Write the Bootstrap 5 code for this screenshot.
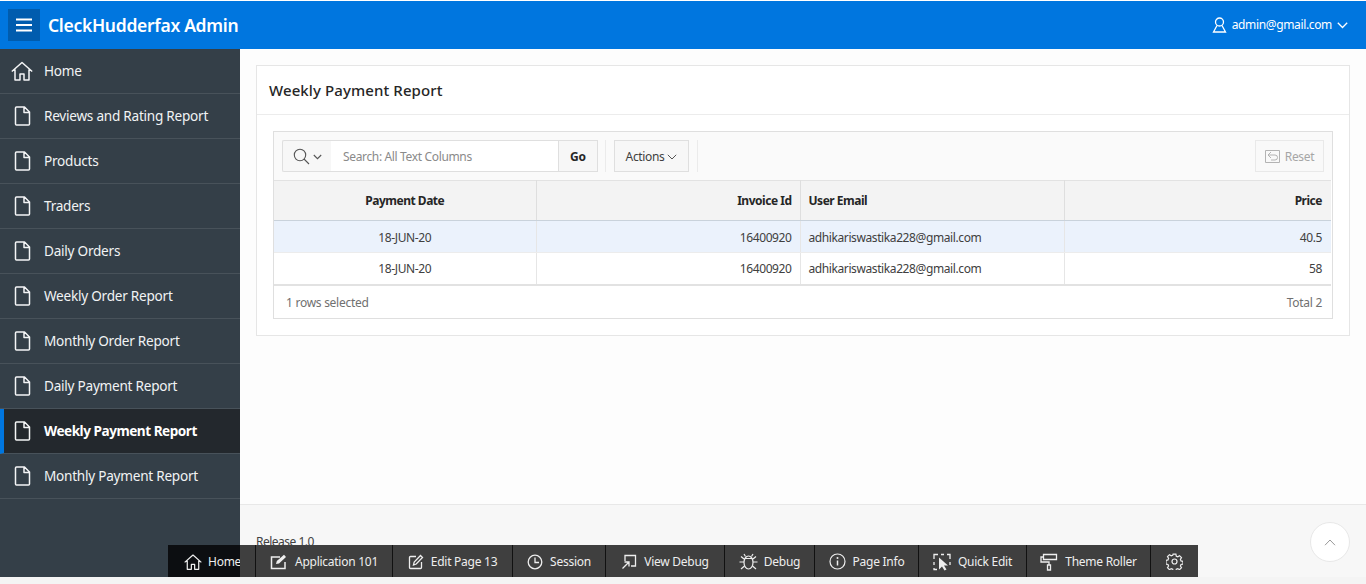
<!DOCTYPE html>
<html lang="en"><head><meta charset="utf-8"><title>Weekly Payment Report</title>
<link rel="stylesheet" href="https://cdn.jsdelivr.net/npm/bootstrap@5.3.0/dist/css/bootstrap.min.css">
<style>
html,body{height:100%;background:#f4f4f4;overflow:hidden}
body{font-family:"Noto Sans","Open Sans",sans-serif;font-size:12.5px;color:#404040}
.shell{height:577px;padding-top:1px;background:#fff;overflow:hidden}
.topbar{height:48px;background:#0076df;color:#fff;padding:0 18px 0 8px}
.burger{width:32px;height:32px;background:#005cae;border:0;padding:0}
.brand-name{font-size:17.5px;font-weight:600;margin-left:8px;letter-spacing:-.3px}
.user-link{font-size:12px;gap:5px;letter-spacing:-.35px}
.body-wrap{height:528px}
.side{width:240px;background:#343f48;flex:none}
.side-item{height:45px;color:#f1f3f4;font-size:13.6px;letter-spacing:-.25px;border-bottom:1px solid #48525a;padding-left:11px;gap:11px}
.side-item svg{flex:none;width:22px;height:22px}
.side-item.on{background:#23282d;font-weight:700;border-left:4px solid #0076df;padding-left:7px;letter-spacing:-.48px;color:#fff}
.main-col{min-width:0;background:#fff}
.content-zone{flex:1;padding:16px 16px 0;background:#fdfdfd}
.panel{border:1px solid #e6e6e6;background:#fff;height:271px}
.panel-head{height:49px;border-bottom:1px solid #ececec;padding-left:12px;font-size:15px;font-weight:500;color:#262626;letter-spacing:.1px}
.panel-body{padding:16px}
.report{border:1px solid #dfdfdf;height:188px;background:#fff}
.tools{height:48px;background:#fafafa;padding:8px}
.tool{height:32px;border:1px solid #dfdfdf;background:#f7f7f7;font-size:12px;color:#404040;padding-top:1px}
.magnify{width:49px;gap:3px;justify-content:center;border-right:0;border-radius:2px 0 0 2px}
.field{width:227px;background:#fff;border-left:0;border-right:0;color:#8a8a8a;padding-left:12px;letter-spacing:-.35px}
.go{width:40px;font-weight:700;justify-content:center;color:#262626;letter-spacing:-.2px}
.act{width:75px;justify-content:center;gap:3px;margin-left:16px;letter-spacing:-.35px}
.sep{width:1px;height:32px;background:#ebebeb;margin-left:8px}
.sep.first{margin-left:7px;margin-right:-8px}
.reset{width:69px;margin-left:auto;color:#a6a6a6;background:#f9f9f9;border-color:#e9e9e9;justify-content:center;gap:5px;letter-spacing:-.35px}
.grid-table{table-layout:fixed;width:1057px;margin:0;font-size:12px;border-collapse:collapse;letter-spacing:-.4px}
.grid-table th,.grid-table td{padding:0 8px 0 8px;border:0;border-right:1px solid #e6e6e6;vertical-align:middle;color:#404040;box-shadow:none;background:transparent}
.grid-table th:last-child,.grid-table td:last-child{border-right:0;padding-right:9px}
.grid-table thead th{height:40px;background:#f3f3f3;font-weight:700;color:#262626;border-top:1px solid #e2e2e2;border-bottom:1px solid #c9d2db;border-right-color:#dedede;letter-spacing:-.48px}
.grid-table tbody td{height:32px;border-bottom:1px solid #ececec;padding-top:2px}
.grid-table tbody tr.picked td{background:#ebf2fc}
.grid-table tbody tr:last-child td{border-bottom:2px solid #e2e2e2}
.report-foot{height:34px;padding:0 10px 0 12px;color:#707070;font-size:12px;letter-spacing:-.27px}
.foot-zone{height:73px;background:#f7f7f7;border-top:1px solid #e8e8e8;padding:28px 16px 0;font-size:12px;color:#404040;position:relative;letter-spacing:-.5px}
.to-top{position:absolute;right:16px;top:17px;width:40px;height:40px;border-radius:50%;background:#fff;border:1px solid #e8e8e8}
.devbar{position:fixed;left:168px;top:545px;width:1030px;height:32px;background:#3f3f3f;color:#eee;font-size:12px;letter-spacing:-.26px}
.dev-item{height:32px;border-right:1px solid #111;justify-content:center;gap:7px;flex:none;padding-top:1px}
.dev-item svg{flex:none}
.dev-home{width:72px;background:#0c0e11;overflow:hidden;border-right:0;justify-content:flex-start;padding-left:16px;white-space:nowrap;gap:6px}
.dev-spacer{width:16px;height:32px;border-right:1px solid #111;flex:none}
</style></head><body>
<svg width="0" height="0" class="d-none"><defs>
<symbol id="doc" viewBox="0 0 22 22"><path d="M4.500 3a1 1 0 0 1 1-1h8l5 5v12a1 1 0 0 1-1 1h-12a1 1 0 0 1-1-1zM13 2.500V7.500h5.500" fill="none" stroke="#f4f5f6" stroke-width="1.500" stroke-linejoin="round"/></symbol>
<symbol id="house" viewBox="0 0 22 22"><path d="M.8 11.500 11 2.500l10.200 9M4 9.500v10.500h5v-6h4v6h5V9.500" fill="none" stroke="currentColor" stroke-width="1.500" stroke-linejoin="round"/></symbol>
</defs></svg>
<div class="shell">
<header class="topbar d-flex align-items-center">
<button class="burger d-flex align-items-center justify-content-center" aria-label="Menu"><svg width="16" height="14" viewBox="0 0 16 14"><path d="M0 1.500h16M0 7h16M0 12.500h16" stroke="#fff" stroke-width="2"/></svg></button>
<span class="brand-name">CleckHudderfax Admin</span>
<div class="user-link d-flex align-items-center ms-auto"><svg width="15" height="16" viewBox="0 0 15 16"><circle cx="7.500" cy="5" r="4" fill="none" stroke="#fff" stroke-width="1.300"/><path d="M5 8.500 1.500 15h12L10 8.500" fill="none" stroke="#fff" stroke-width="1.300"/></svg><span>admin@gmail.com</span><svg width="11" height="7" viewBox="0 0 11 7"><path d="m.8.800 4.700 4.700L10.200.800" fill="none" stroke="#fff" stroke-width="1.300"/></svg></div>
</header>
<div class="body-wrap d-flex">
<nav class="side">
<div class="side-item d-flex align-items-center"><svg style="color:#f4f5f6"><use href="#house"/></svg>Home</div>
<div class="side-item d-flex align-items-center"><svg><use href="#doc"/></svg>Reviews and Rating Report</div>
<div class="side-item d-flex align-items-center"><svg><use href="#doc"/></svg>Products</div>
<div class="side-item d-flex align-items-center"><svg><use href="#doc"/></svg>Traders</div>
<div class="side-item d-flex align-items-center"><svg><use href="#doc"/></svg>Daily Orders</div>
<div class="side-item d-flex align-items-center"><svg><use href="#doc"/></svg>Weekly Order Report</div>
<div class="side-item d-flex align-items-center"><svg><use href="#doc"/></svg>Monthly Order Report</div>
<div class="side-item d-flex align-items-center"><svg><use href="#doc"/></svg>Daily Payment Report</div>
<div class="side-item on d-flex align-items-center"><svg><use href="#doc"/></svg>Weekly Payment Report</div>
<div class="side-item d-flex align-items-center"><svg><use href="#doc"/></svg>Monthly Payment Report</div>
</nav>
<div class="main-col flex-grow-1 d-flex flex-column">
<div class="content-zone">
<section class="panel">
<div class="panel-head d-flex align-items-center">Weekly Payment Report</div>
<div class="panel-body">
<div class="report">
<div class="tools d-flex align-items-center">
<div class="tool magnify d-flex align-items-center"><svg width="17" height="17" viewBox="0 0 17 17"><circle cx="7" cy="7" r="5.700" fill="none" stroke="#555" stroke-width="1.100"/><path d="m11 11 5 5" stroke="#555" stroke-width="1.100"/></svg><svg width="9" height="6" viewBox="0 0 9 6"><path d="m.8 1 3.700 3.700L8.200 1" fill="none" stroke="#555" stroke-width="1.100"/></svg></div>
<div class="tool field d-flex align-items-center">Search: All Text Columns</div>
<div class="tool go d-flex align-items-center">Go</div>
<div class="sep first"></div>
<div class="tool act d-flex align-items-center">Actions<svg width="10" height="6" viewBox="0 0 10 6"><path d="m.8.800 4.200 4.200L9.200.800" fill="none" stroke="#555" stroke-width="1"/></svg></div>
<div class="sep"></div>
<div class="tool reset d-flex align-items-center"><svg width="15" height="15" viewBox="0 0 15 15"><path d="M.5 1.500h14v12H.5z" fill="none" stroke="#b3b3b3"/><path d="M3 6h7a2.500 2.500 0 0 1 0 5H6M3 6l3-3M3 6l3 3" fill="none" stroke="#b3b3b3"/></svg>Reset</div>
</div>
<table class="table grid-table">
<colgroup><col style="width:262px"><col style="width:264px"><col style="width:264px"><col></colgroup>
<thead><tr><th class="text-center">Payment Date</th><th class="text-end">Invoice Id</th><th>User Email</th><th class="text-end">Price</th></tr></thead>
<tbody>
<tr class="picked"><td class="text-center">18-JUN-20</td><td class="text-end">16400920</td><td>adhikariswastika228@gmail.com</td><td class="text-end">40.5</td></tr>
<tr><td class="text-center">18-JUN-20</td><td class="text-end">16400920</td><td>adhikariswastika228@gmail.com</td><td class="text-end">58</td></tr>
</tbody></table>
<div class="report-foot d-flex align-items-center justify-content-between"><span>1 rows selected</span><span>Total 2</span></div>
</div></div>
</section>
</div>
<footer class="foot-zone">Release 1.0
<div class="to-top d-flex align-items-center justify-content-center"><svg width="12" height="7" viewBox="0 0 12 7"><path d="M1 6.200 6 1l5 5.200" fill="none" stroke="#999" stroke-width="1"/></svg></div>
</footer>
</div></div>
</div>
<div class="devbar d-flex">
<div class="dev-item dev-home d-flex align-items-center"><svg width="18" height="18" style="color:#eee"><use href="#house"/></svg>Home</div>
<div class="dev-spacer"></div>
<div class="dev-item d-flex align-items-center" style="width:137px"><svg width="18" height="16" viewBox="0 0 18 16"><path d="M15 8v6.500H1.500V3H10" fill="none" stroke="#eee" stroke-width="1.500"/><path d="m6 10 .8-3L14 .8 16 3l-7 6.500z" fill="#eee"/></svg>Application 101</div>
<div class="dev-item d-flex align-items-center" style="width:120px"><svg width="16" height="16" viewBox="0 0 16 16"><path d="M13.500 8v5.500a1 1 0 0 1-1 1h-10a1 1 0 0 1-1-1v-10a1 1 0 0 1 1-1H8M5.500 11l.7-3L12.500 1.500l2 2L8.200 10z" fill="none" stroke="#eee" stroke-width="1.300"/></svg>Edit Page 13</div>
<div class="dev-item d-flex align-items-center" style="width:93px"><svg width="16" height="16" viewBox="0 0 16 16"><circle cx="8" cy="8" r="6.800" fill="none" stroke="#eee" stroke-width="1.300"/><path d="M8 3.500V8.500H12" fill="none" stroke="#eee" stroke-width="1.300"/></svg>Session</div>
<div class="dev-item d-flex align-items-center" style="width:119px"><svg width="16" height="16" viewBox="0 0 16 16"><path d="M4 7V1.500h10.500V12H10M1.500 14.500 8 8M3.500 8H8v4.500" fill="none" stroke="#eee" stroke-width="1.300"/></svg>View Debug</div>
<div class="dev-item d-flex align-items-center" style="width:90px;gap:6px"><svg width="19" height="18" viewBox="0 0 19 18"><ellipse cx="9.500" cy="9.500" rx="4.500" ry="6.500" fill="none" stroke="#eee" stroke-width="1.200"/><path d="M5.500 5.500h8M6.500 3.500 5 1M12.500 3.500 14 1M5 9H.5M14 9h4.500M5.500 13l-3.500 3M13.500 13l3.500 3M5 6 2 3.500M14 6l3-2.500" fill="none" stroke="#eee" stroke-width="1.200"/></svg>Debug</div>
<div class="dev-item d-flex align-items-center" style="width:104px"><svg width="17" height="17" viewBox="0 0 17 17"><circle cx="8.500" cy="8.500" r="7.500" fill="none" stroke="#eee" stroke-width="1.200"/><path d="M8.500 7.500v5" stroke="#eee" stroke-width="1.500"/><circle cx="8.500" cy="5" r="1" fill="#eee"/></svg>Page Info</div>
<div class="dev-item d-flex align-items-center" style="width:108px"><svg width="18" height="18" viewBox="0 0 18 18"><path d="M1 6V1.500h4M8 1.500h3M14 1.500h3V6M1 9v3M1 15v1.500h3M17 9v3" fill="none" stroke="#eee" stroke-width="1.300"/><path d="M6 4.500v12l3-3 2.500 4 2-1-2.500-4h4z" fill="#eee"/></svg>Quick Edit</div>
<div class="dev-item d-flex align-items-center" style="width:124px"><svg width="18" height="18" viewBox="0 0 18 18"><path d="M3.500 1.500h13v5h-13zM3.500 4H1v5h8v3M7.500 12h3v5h-3z" fill="none" stroke="#eee" stroke-width="1.300"/></svg>Theme Roller</div>
<div class="dev-item d-flex align-items-center flex-grow-1" style="border-right:0"><svg width="17" height="17" viewBox="0 0 17 17"><path d="M7.100 1.200h2.800l.4 2 1.500.6 1.700-1.100 2 2-1.100 1.700.6 1.500 2 .4v2.800l-2 .4-.6 1.500 1.100 1.700-2 2-1.700-1.100-1.500.6-.4 2H7.100l-.4-2-1.500-.6-1.700 1.100-2-2 1.100-1.700-.6-1.500-2-.4V7.300l2-.4.6-1.500-1.100-1.700 2-2 1.700 1.100 1.500-.6z" fill="none" stroke="#eee" stroke-width="1.200"/><circle cx="8.500" cy="8.500" r="2.500" fill="none" stroke="#eee" stroke-width="1.200"/></svg></div>
</div>
</body></html>
